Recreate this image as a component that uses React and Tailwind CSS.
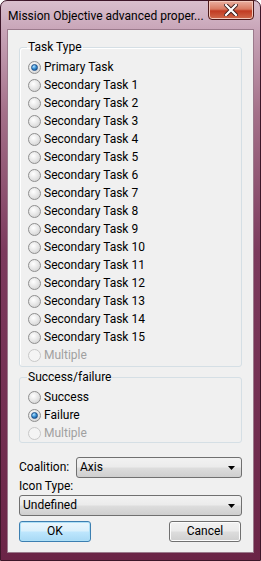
import React from 'react';

const TASKS = [
  'Primary Task',
  ...Array.from({ length: 15 }, (_, i) => `Secondary Task ${i + 1}`),
];

function Radio({ label, checked, disabled }) {
  return (
    <div className="flex h-[18px] items-center gap-[3px]">
      <span
        className={`flex h-[13px] w-[13px] items-center justify-center rounded-full border ${
          disabled
            ? 'border-[#c8c8c8] bg-[#f4f4f4]'
            : 'border-[#8f8f8f] bg-[radial-gradient(circle_at_40%_35%,#ffffff_0%,#e6e6e6_50%,#c9c9c9_100%)]'
        }`}
      >
        {checked && (
          <span className="h-[7px] w-[7px] rounded-full border border-[#1b4f8a] bg-[radial-gradient(circle_at_35%_30%,#b9e4ff_0%,#3d95d8_45%,#0f3f7a_100%)]" />
        )}
      </span>
      <span className={disabled ? 'text-[#a0a0a0]' : 'text-black'}>{label}</span>
    </div>
  );
}

function Combo({ value, className }) {
  return (
    <div
      className={`flex h-[21px] items-center justify-between rounded-[3px] border border-[#707070] bg-[linear-gradient(180deg,#f2f2f2_0%,#ebebeb_48%,#dddddd_52%,#cfcfcf_100%)] pl-[3px] pr-[6px] ${className}`}
    >
      <span>{value}</span>
      <svg width="7" height="4" viewBox="0 0 7 4">
        <path d="M0 0 H7 L3.5 4 Z" fill="#000" />
      </svg>
    </div>
  );
}

function Button({ label, primary }) {
  return (
    <div
      className={`flex h-[21px] w-[72px] items-center justify-center rounded-[3px] border ${
        primary
          ? 'border-[#3c7fb1] bg-[linear-gradient(180deg,#eaf6fd_0%,#d9f0fc_48%,#bee6fd_52%,#a7d9f5_100%)] shadow-[inset_0_0_0_1px_#aee0f7]'
          : 'border-[#707070] bg-[linear-gradient(180deg,#f2f2f2_0%,#ebebeb_48%,#dddddd_52%,#cfcfcf_100%)] shadow-[inset_0_0_0_1px_#fcfcfc]'
      }`}
    >
      {label}
    </div>
  );
}

export default function App() {
  return (
    <div
      className="flex h-[561px] w-[261px] flex-col rounded-t-[7px] border border-[#3d1629] bg-[linear-gradient(180deg,#d9bfcd_0%,#c9a6b9_5%,#a47089_20%,#7c3a5d_45%,#6b2547_100%)] text-[12px] leading-[15px] text-black"
      style={{ fontFamily: 'Roboto, "Liberation Sans", sans-serif' }}
    >
      {/* Title bar */}
      <div className="flex h-[28px] shrink-0 items-start justify-between pl-[7px] pr-[6px]">
        <span className="mt-[8px] whitespace-nowrap text-[12px] text-black">Mission Objective advanced proper...</span>
        <div className="mt-[-1px] flex h-[20px] w-[46px] shrink-0 items-center justify-center rounded-b-[4px] border border-[#4d1a1a] bg-[linear-gradient(180deg,#eab0a0_0%,#d87a62_45%,#c23b22_55%,#d06a4c_100%)] shadow-[inset_0_0_0_1px_#f3c7bb]">
          <svg width="14" height="12" viewBox="0 0 14 12">
            <path d="M2 1 L12 11 M12 1 L2 11" stroke="#3a1c1c" strokeWidth="4" strokeLinecap="square" />
            <path d="M2 1 L12 11 M12 1 L2 11" stroke="#ffffff" strokeWidth="2.2" strokeLinecap="square" />
          </svg>
        </div>
      </div>

      {/* Client area */}
      <div className="mx-[6px] mb-[7px] flex flex-1 flex-col border border-[#9b7a8c] bg-[#f0f0f0] px-[11px] pt-[10px]">
        <fieldset className="rounded-[3px] border border-[#d5dfe5] px-[8px] pb-[2px] pt-[3px] shadow-[inset_1px_1px_0_#ffffff]">
          <legend className="ml-[-1px] px-[1px]">Task Type</legend>
          {TASKS.map((t, i) => (
            <Radio key={t} label={t} checked={i === 0} />
          ))}
          <Radio label="Multiple" disabled />
        </fieldset>

        <fieldset className="mt-[3px] rounded-[3px] border border-[#d5dfe5] px-[8px] pb-[0px] pt-[3px]">
          <legend className="ml-[-1px] px-[1px]">Success/failure</legend>
          <Radio label="Success" />
          <Radio label="Failure" checked />
          <Radio label="Multiple" disabled />
        </fieldset>

        <div className="mt-[14px] flex items-center">
          <span className="w-[57px]">Coalition:</span>
          <Combo value="Axis" className="flex-1" />
        </div>
        <div className="h-[17px] pt-[1px]">Icon Type:</div>
        <Combo value="Undefined" />

        <div className="mt-[5px] flex justify-between pr-[1px]">
          <Button label="OK" primary />
          <Button label="Cancel" />
        </div>
      </div>
    </div>
  );
}
